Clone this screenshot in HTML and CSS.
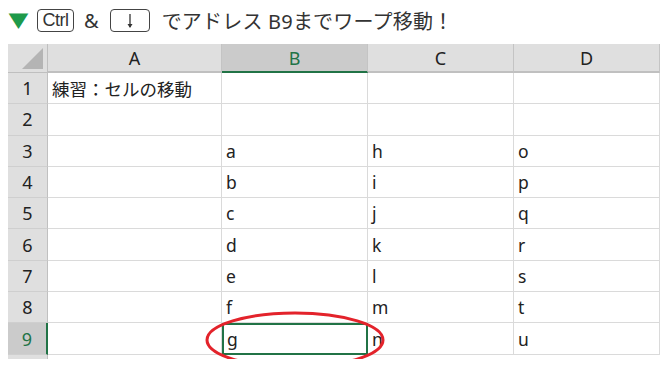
FILE: index.html
```html
<!DOCTYPE html>
<html lang="ja">
<head>
    <meta charset="UTF-8">
    <meta name="viewport" content="width=device-width, initial-scale=1.0">
    <title>セルの移動</title>
    <link rel="stylesheet" href="styles.css">
</head>
<body>

<div class="caption">
    <span class="mark">▼</span>
    <span class="key">Ctrl</span>
    <span class="amp">&amp;</span>
    <span class="key key-wide">
        <svg width="10" height="16" viewBox="0 0 10 16">
            <line x1="5" y1="1" x2="5" y2="14" stroke="#333" stroke-width="1.3"/>
            <path d="M2.5 11 L5 15 L7.5 11 Z" fill="#333"/>
        </svg>
    </span>
    <span class="text">でアドレス B9までワープ移動！</span>
</div>

<div class="sheet-wrap">
    <div class="sheet">
        <div class="corner"><span class="corner-tri"></span></div>
        <div class="col-head">A</div>
        <div class="col-head active">B</div>
        <div class="col-head">C</div>
        <div class="col-head last">D</div>

        <div class="row-head">1</div>
        <div class="cell">練習：セルの移動</div><div class="cell"></div><div class="cell"></div><div class="cell"></div>

        <div class="row-head">2</div>
        <div class="cell"></div><div class="cell"></div><div class="cell"></div><div class="cell"></div>

        <div class="row-head">3</div>
        <div class="cell"></div><div class="cell">a</div><div class="cell">h</div><div class="cell">o</div>

        <div class="row-head">4</div>
        <div class="cell"></div><div class="cell">b</div><div class="cell">i</div><div class="cell">p</div>

        <div class="row-head">5</div>
        <div class="cell"></div><div class="cell">c</div><div class="cell">j</div><div class="cell">q</div>

        <div class="row-head">6</div>
        <div class="cell"></div><div class="cell">d</div><div class="cell">k</div><div class="cell">r</div>

        <div class="row-head">7</div>
        <div class="cell"></div><div class="cell">e</div><div class="cell">l</div><div class="cell">s</div>

        <div class="row-head">8</div>
        <div class="cell"></div><div class="cell">f</div><div class="cell">m</div><div class="cell">t</div>

        <div class="row-head active">9</div>
        <div class="cell"></div><div class="cell selected">g</div><div class="cell">n</div><div class="cell">u</div>
    </div>
    <div class="row-head-tail"></div>

    <!-- red circle around B9 -->
    <svg class="ring" width="190" height="64" viewBox="0 0 190 64">
        <ellipse cx="96" cy="32" rx="88" ry="27" fill="none" stroke="#e3232b" stroke-width="3"/>
    </svg>
</div>

</body>
</html>
```

FILE: styles.css
```css
body {
    margin: 0;
    background: #fff;
    font-family: "Noto Sans", "Noto Sans CJK JP", sans-serif;
    color: #222;
}

/* Caption line */
.caption {
    display: flex;
    align-items: center;
    height: 40px;
    padding-left: 9px;
    font-size: 20px;
    color: #333;
}

.mark {
    color: #1e9a4a;
    font-size: 19px;
    margin-right: 9px;
    transform: scaleX(1.1);
}

.key {
    display: inline-flex;
    align-items: center;
    justify-content: center;
    box-sizing: border-box;
    height: 23px;
    width: 37px;
    border: 1px solid #444;
    border-radius: 4px;
    font-size: 18px;
    line-height: 1;
    letter-spacing: -0.5px;
    font-family: "Liberation Sans", Arial, sans-serif;
}

.key-wide {
    width: 40px;
    align-items: flex-end;
    padding-bottom: 2px;
}

.amp {
    margin: 0 11px 0 10px;
}

.text {
    margin-left: 12px;
    letter-spacing: 0.2px;
}

/* Sheet */
.sheet-wrap {
    position: relative;
    padding: 4px 0 0 8px;
}

.sheet {
    display: grid;
    grid-template-columns: 40px 174px 146px 146px 146px;
    grid-template-rows: 29px repeat(9, 31.3px);
    width: 652px;
}

.corner {
    background: #dfdfdf;
    border-right: 1px solid #bfbfbf;
    border-bottom: 1px solid #bfbfbf;
    position: relative;
}

.corner-tri {
    position: absolute;
    right: 4px;
    bottom: 3px;
    width: 0;
    height: 0;
    border-left: 21px solid transparent;
    border-bottom: 21px solid #b4b4b4;
}

.col-head {
    background: #dfdfdf;
    border-right: 1px solid #c4c4c4;
    border-bottom: 2px solid #c0c0c0;
    display: flex;
    align-items: center;
    justify-content: center;
    font-size: 18px;
    color: #222;
}

.col-head.active {
    background: #cbcbcb;
    border-bottom-color: #217346;
    color: #217346;
}

.row-head {
    background: #dfdfdf;
    border-right: 1px solid #c0c0c0;
    border-bottom: 1px solid #cfcfcf;
    display: flex;
    align-items: center;
    justify-content: center;
    font-size: 18px;
    color: #222;
}

.row-head.active {
    background: #cbcbcb;
    border-right: 2px solid #217346;
    color: #217346;
}

.row-head-tail {
    width: 40px;
    height: 4px;
    background: #dfdfdf;
    border-right: 1px solid #c0c0c0;
    box-sizing: border-box;
}

.cell {
    border-right: 1px solid #dadada;
    border-bottom: 1px solid #dadada;
    display: flex;
    align-items: center;
    padding-left: 4px;
    font-size: 17.5px;
    color: #222;
    white-space: nowrap;
}

.cell.selected {
    border: 2px solid #217346;
    padding-left: 3px;
}

.ring {
    position: absolute;
    left: 199px;
    top: 268px;
}
```
